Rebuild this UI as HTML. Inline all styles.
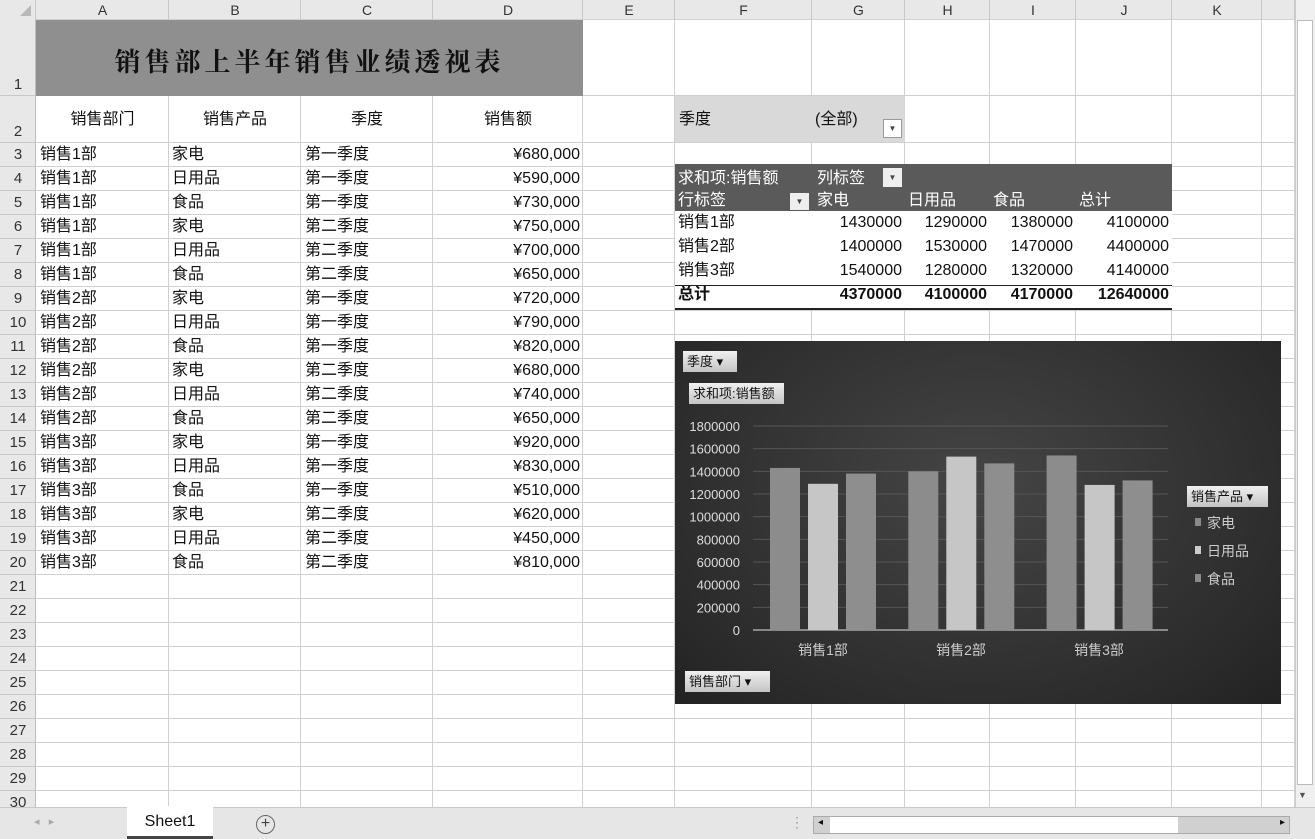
<!DOCTYPE html>
<html><head><meta charset="utf-8"><style>
*{margin:0;padding:0;box-sizing:border-box}
body{width:1315px;height:839px;overflow:hidden;background:#fff;position:relative;font-family:"Liberation Sans","Noto Sans CJK SC",sans-serif;color:#111}
.a{position:absolute}
.hl{position:absolute;height:1px;background:#d0d0d0}
.vl{position:absolute;width:1px;background:#d0d0d0}
.ch{position:absolute;top:0;height:20px;font-size:14px;text-align:center;line-height:20px;color:#333}
.rn{position:absolute;left:0;width:36px;font-size:15px;text-align:center;color:#333}
.t{position:absolute;font-size:16px;line-height:24px;white-space:nowrap}
.btn{position:absolute;background:linear-gradient(#f0f0f0,#c4c4c4);color:#111;font-size:13px;line-height:21px;padding-left:4px;white-space:nowrap}
</style></head><body>
<div class="a" style="left:0;top:0;width:1295px;height:20px;background:#e8e8e8;border-bottom:1px solid #bdbdbd"></div>
<div class="a" style="left:0;top:0;width:36px;height:807px;background:#e8e8e8;border-right:1px solid #bdbdbd"></div>
<div class="a" style="left:20px;top:5px;width:0;height:0;border-left:11px solid transparent;border-bottom:11px solid #b8b8b8"></div>
<div id="g"></div>
<div class="a" style="left:36px;top:20px;width:547px;height:76px;background:#8f8f8f;text-align:center;line-height:82px;font-size:26px;font-weight:bold;font-family:'Noto Serif CJK SC',serif;letter-spacing:4px;color:#111">销售部上半年销售业绩透视表</div>
<div class="a" style="left:675px;top:96px;width:230px;height:46px;background:#d9d9d9"></div>
<div class="t" style="left:679px;top:108px">季度</div>
<div class="t" style="left:815px;top:108px">(全部)</div>
<div class="a" style="left:883px;top:119px;width:19px;height:19px;background:#fff;border:1px solid #999;font-size:8px;text-align:center;line-height:17px;color:#444">▼</div>
<div class="a" style="left:675px;top:164px;width:497px;height:47px;background:#5a5a5a"></div>
<div class="a" style="left:675px;top:211px;width:497px;height:98px;background:#fff"></div>
<div class="t" style="left:678px;top:167px;color:#fff">求和项:销售额</div>
<div class="t" style="left:817px;top:167px;color:#fff">列标签</div>
<div class="a" style="left:883px;top:168px;width:19px;height:19px;background:#eee;font-size:8px;text-align:center;line-height:19px;color:#444">▼</div>
<div class="t" style="left:678px;top:189px;color:#fff">行标签</div>
<div class="a" style="left:790px;top:193px;width:19px;height:17px;background:#eee;font-size:8px;text-align:center;line-height:17px;color:#444">▼</div>
<div class="t" style="left:817px;top:189px;color:#fff">家电</div>
<div class="t" style="left:908px;top:189px;color:#fff">日用品</div>
<div class="t" style="left:993px;top:189px;color:#fff">食品</div>
<div class="t" style="left:1079px;top:189px;color:#fff">总计</div>
<div class="a" style="left:675px;top:285px;width:497px;height:1px;background:#222"></div>
<div class="a" style="left:675px;top:308px;width:497px;height:2px;background:#222"></div>
<div id="pv"></div>
<div class="a" style="left:675px;top:341px;width:606px;height:363px;background:radial-gradient(ellipse at 50% 40%,#454545,#2a2a2a 80%,#222);overflow:hidden">
<svg width="606" height="363" style="position:absolute;left:0;top:0" font-family="Liberation Sans" font-size="13">
<g stroke="#555" stroke-width="1" id="grid"></g>
<line x1="78" y1="289" x2="493" y2="289" stroke="#888" stroke-width="2"/>
<g id="bars"></g>
<g fill="#ddd" text-anchor="end" id="yl"></g>
<g fill="#ccc" font-size="14" font-family="Liberation Sans,Noto Sans CJK SC" text-anchor="middle">
<text x="148" y="314">销售1部</text><text x="286" y="314">销售2部</text><text x="424" y="314">销售3部</text></g>
<g font-size="14" fill="#ccc" font-family="Liberation Sans,Noto Sans CJK SC">
<rect x="520" y="177" width="6" height="8" fill="#8a8a8a"/><text x="532" y="187">家电</text>
<rect x="520" y="205" width="6" height="8" fill="#ccc"/><text x="532" y="215">日用品</text>
<rect x="520" y="233" width="6" height="8" fill="#8a8a8a"/><text x="532" y="243">食品</text></g>
</svg>
<div class="btn" style="left:8px;top:10px;width:54px">季度 ▾</div>
<div class="btn" style="left:14px;top:42px;width:95px">求和项:销售额</div>
<div class="btn" style="left:10px;top:330px;width:85px">销售部门 ▾</div>
<div class="btn" style="left:512px;top:145px;width:81px">销售产品 ▾</div>
</div>
<div class="a" style="left:1295px;top:0;width:20px;height:807px;background:#f0f0f0;border-left:1px solid #ccc"></div>
<div class="a" style="left:1297px;top:20px;width:16px;height:765px;background:#fff;border:1px solid #bbb"></div>
<div class="a" style="left:1298px;top:790px;font-size:9px;color:#555">▼</div>
<div class="a" style="left:0;top:807px;width:1315px;height:32px;background:#e6e6e6;border-top:1px solid #c8c8c8"></div>
<div class="a" style="left:34px;top:815px;font-size:11px;color:#aaa">◂ &nbsp; ▸</div>
<div class="a" style="left:127px;top:806px;width:86px;height:33px;background:#fff;border-bottom:3px solid #444;font-size:16px;text-align:center;line-height:32px">Sheet1</div>
<div class="a" style="left:256px;top:815px;width:19px;height:19px;border:1px solid #666;border-radius:50%;font-size:16px;text-align:center;line-height:16px;color:#444">+</div>
<div class="a" style="left:790px;top:814px;font-size:14px;color:#999">⋮</div>
<div class="a" style="left:813px;top:816px;width:477px;height:18px;background:#d0d0d0;border:1px solid #aaa"></div>
<div class="a" style="left:830px;top:817px;width:348px;height:16px;background:#fff"></div>
<div class="a" style="left:818px;top:817px;font-size:10px">◂</div>
<div class="a" style="left:1280px;top:817px;font-size:10px">▸</div>
<script>
var cols=[36,169,301,433,583,675,812,905,990,1076,1172,1262,1295];
var L=["A","B","C","D","E","F","G","H","I","J","K",""];
var h="";
var rows=[20,96,143];for(var i=4;i<=31;i++)rows.push(143+(i-3)*24);
for(var i=1;i<cols.length;i++){h+='<div class="vl" style="left:'+(cols[i]-1)+'px;top:20px;height:787px"></div>';}
for(var i=0;i<rows.length;i++){h+='<div class="hl" style="left:36px;top:'+(rows[i]-1)+'px;width:1259px"></div>';}
for(var i=0;i<11;i++)h+='<div class="ch" style="left:'+cols[i]+'px;width:'+(cols[i+1]-cols[i])+'px">'+L[i]+'</div>';
for(var i=0;i<cols.length;i++)h+='<div class="a" style="left:'+(cols[i]-1)+'px;top:0;width:1px;height:20px;background:#c8c8c8"></div>';
for(var r=1;r<=30;r++){var t=rows[r-1],b=rows[r];h+='<div class="rn" style="top:'+t+'px;height:'+(b-t)+'px;line-height:'+(r<3?(b-t)*2-22:24)+'px">'+r+'</div>';h+='<div class="a" style="left:0;top:'+(b-1)+'px;width:36px;height:1px;background:#c8c8c8"></div>';}
var hd=["销售部门","销售产品","季度","销售额"];
for(var i=0;i<4;i++)h+='<div class="t" style="left:'+cols[i]+'px;width:'+(cols[i+1]-cols[i])+'px;text-align:center;top:108px">'+hd[i]+'</div>';
var p=["家电","日用品","食品"];
var d=[[1,0,1,680],[1,1,1,590],[1,2,1,730],[1,0,2,750],[1,1,2,700],[1,2,2,650],[2,0,1,720],[2,1,1,790],[2,2,1,820],[2,0,2,680],[2,1,2,740],[2,2,2,650],[3,0,1,920],[3,1,1,830],[3,2,1,510],[3,0,2,620],[3,1,2,450],[3,2,2,810]];
for(var i=0;i<d.length;i++){var y=143+i*24;h+='<div class="t" style="left:40px;top:'+y+'px">销售'+d[i][0]+'部</div><div class="t" style="left:172px;top:'+y+'px">'+p[d[i][1]]+'</div><div class="t" style="left:305px;top:'+y+'px">'+(d[i][2]==1?"第一季度":"第二季度")+'</div><div class="t" style="left:433px;width:147px;text-align:right;top:'+y+'px">¥'+d[i][3]+',000</div>';}
document.getElementById("g").innerHTML=h;
var pv=[["销售1部",1430000,1290000,1380000,4100000],["销售2部",1400000,1530000,1470000,4400000],["销售3部",1540000,1280000,1320000,4140000],["总计",4370000,4100000,4170000,12640000]];
var pr=[812,905,990,1076,1172];h="";
for(var i=0;i<4;i++){var y=211+i*24;var fw=i==3?'font-weight:bold;':'';h+='<div class="t" style="'+fw+'left:678px;top:'+y+'px">'+pv[i][0]+'</div>';for(var j=1;j<5;j++)h+='<div class="t" style="'+fw+'left:'+pr[j-1]+'px;width:'+(pr[j]-pr[j-1]-3)+'px;text-align:right;top:'+y+'px">'+pv[i][j]+'</div>';}
document.getElementById("pv").innerHTML=h;
var s="",yl="";
for(var k=0;k<=9;k++){var y=289-k*204/9;if(k>0)s+='<line x1="78" x2="493" y1="'+y+'" y2="'+y+'"/>';yl+='<text x="65" y="'+(y+5)+'">'+(k*200000)+'</text>';}
document.getElementById("grid").innerHTML=s;document.getElementById("yl").innerHTML=yl;
var bc=["#8c8c8c","#c6c6c6","#8e8e8e"],bs="";
for(var g=0;g<3;g++)for(var j=0;j<3;j++){var v=pv[g][j+1];var hh=v/1800000*204;var x=95+g*138.3+j*38;bs+='<rect x="'+x+'" y="'+(289-hh)+'" width="30" height="'+hh+'" fill="'+bc[j]+'"/>';}
document.getElementById("bars").innerHTML=bs;
</script>
</body></html>
